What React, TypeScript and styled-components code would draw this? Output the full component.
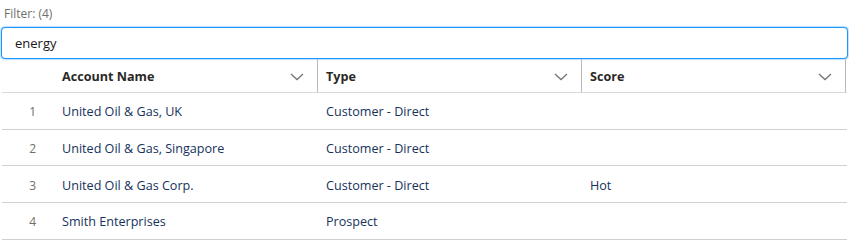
import styled, { createGlobalStyle } from "styled-components"

const GlobalStyle = createGlobalStyle`
  body {
    margin: 0;
    background: #ffffff;
    font-family: "Open Sans", "Noto Sans", sans-serif;
  }
`

type Row = { name: string; type: string; score: string }

const rows: Row[] = [
  { name: "United Oil & Gas, UK", type: "Customer - Direct", score: "" },
  { name: "United Oil & Gas, Singapore", type: "Customer - Direct", score: "" },
  { name: "United Oil & Gas Corp.", type: "Customer - Direct", score: "Hot" },
  { name: "Smith Enterprises", type: "Prospect", score: "" },
]

const columns = ["Account Name", "Type", "Score"]

function Chevron() {
  return (
    <svg width="14" height="8" viewBox="0 0 14 8" fill="none">
      <path d="M1 1l6 5.5L13 1" stroke="#747474" strokeWidth="1.3" />
    </svg>
  )
}

function App() {
  return (
    <Page>
      <GlobalStyle />
      <Label>Filter: ({rows.length})</Label>
      <Input defaultValue="energy" />
      <Table>
        <HeaderRow>
          <NumCell />
          {columns.map((c) => (
            <HeadCell key={c}>
              <span>{c}</span>
              <Chevron />
            </HeadCell>
          ))}
        </HeaderRow>
        {rows.map((r, i) => (
          <BodyRow key={r.name}>
            <NumCell>{i + 1}</NumCell>
            <Cell>{r.name}</Cell>
            <Cell>{r.type}</Cell>
            <Cell>{r.score}</Cell>
          </BodyRow>
        ))}
      </Table>
    </Page>
  )
}

export default App

const Page = styled.div`
  width: 849px;
  padding: 6px 0 0 1px;
  box-sizing: border-box;
`

const Label = styled.div`
  font-size: 12px;
  line-height: 16px;
  color: #706e6b;
  padding-left: 3px;
  margin-bottom: 5px;
`

const Input = styled.input`
  display: block;
  width: 847px;
  height: 32px;
  box-sizing: border-box;
  border: 1px solid #1b96ff;
  border-radius: 4px;
  box-shadow: 0 0 2px #1b96ff;
  padding: 0 13px;
  font-family: inherit;
  font-size: 13px;
  color: #181818;
  outline: none;
`

const Table = styled.div`
  width: 845px;
  margin-left: 1px;
`

const HeaderRow = styled.div`
  display: grid;
  grid-template-columns: 52px 264px 264px 264px;
  height: 34px;
  border-bottom: 1px solid #d8d8d8;
  box-sizing: border-box;
`

const BodyRow = styled.div`
  display: grid;
  grid-template-columns: 52px 264px 264px 264px;
  height: 36.7px;
  box-sizing: border-box;
  border-bottom: 1px solid #d0d0d0;
  align-items: center;
  padding-top: 2px;
`

const NumCell = styled.div`
  text-align: right;
  padding-right: 18px;
  font-size: 12px;
  color: #706e6b;
`

const HeadCell = styled.div`
  display: flex;
  align-items: center;
  justify-content: space-between;
  padding: 2px 13px 0 8px;
  border-right: 1px solid #b9b9b9;
  font-size: 12.6px;
  font-weight: 700;
  color: #2b2826;
`

const Cell = styled.div`
  padding-left: 8px;
  font-size: 12.6px;
  color: #16325c;
  white-space: nowrap;
`
